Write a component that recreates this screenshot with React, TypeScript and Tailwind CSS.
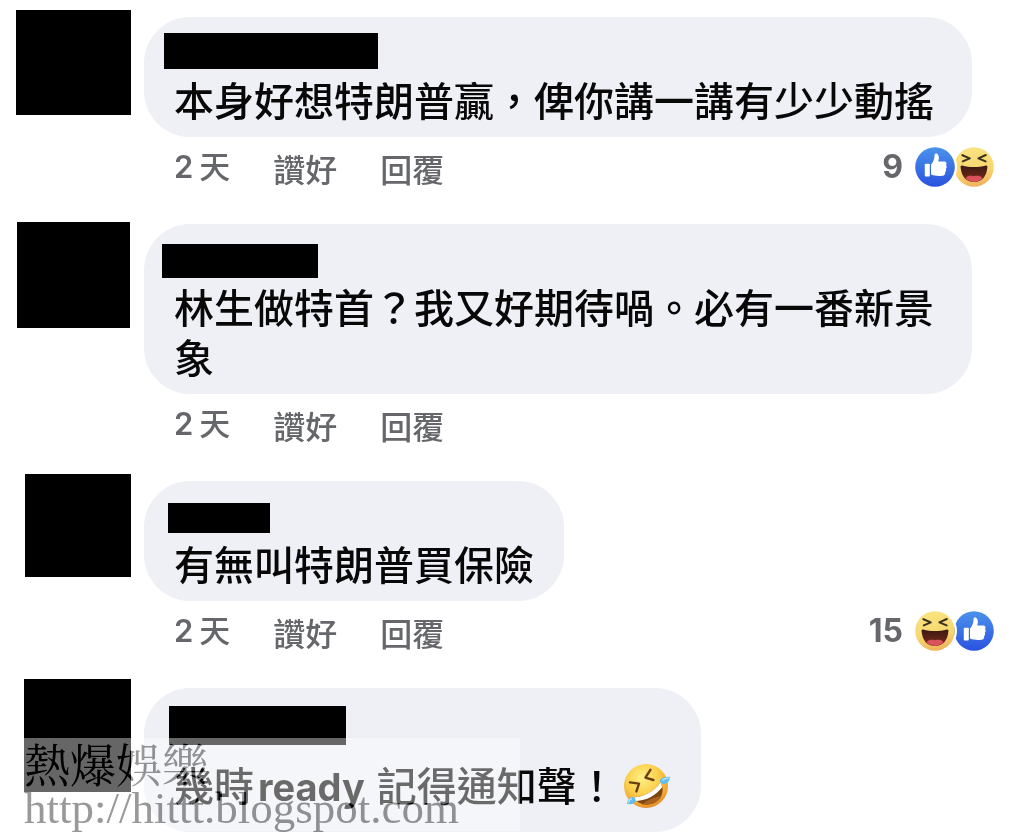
import type { ReactNode } from 'react';

type Reaction = 'like' | 'haha';

interface Comment {
  id: number;
  avatar: string;
  name: string;
  bubble: string;
  line: string;
  body: ReactNode;
  footer: boolean;
  count?: number;
  reactions?: Reaction[];
}

function LikeIcon() {
  return (
    <svg viewBox="0 0 40 40" className="size-10" role="img" aria-label="Like">
      <defs>
        <linearGradient id="like-blue" x1="0" y1="0" x2="0" y2="1">
          <stop offset="0" stopColor="#4a93ea" />
          <stop offset="1" stopColor="#2a52e0" />
        </linearGradient>
      </defs>
      <circle cx="20" cy="20" r="19.8" fill="url(#like-blue)" />
      <rect x="9.8" y="16.8" width="5" height="12.8" rx="0.8" fill="#fff" />
      <path
        d="M16 17.4C18.2 15.4 19.4 12.2 19.6 8C19.7 6 22.4 6 23.4 8.4C24.2 10.6 23.8 12.6 23.2 14.4H29.2C31.4 14.4 32.2 16.6 31 18C32 19 31.9 20.9 30.8 21.7C31.5 22.9 31.1 24.3 30.1 25C30.6 27.1 29.6 28.6 27.4 28.8C23.4 29.2 19.6 29 16 27.6Z"
        fill="#fff"
      />
    </svg>
  );
}

function HahaIcon() {
  return (
    <svg viewBox="0 0 40 40" className="size-10" role="img" aria-label="Haha">
      <defs>
        <linearGradient id="haha-face" x1="0.4" y1="0" x2="0.6" y2="1">
          <stop offset="0" stopColor="#fae480" />
          <stop offset="0.6" stopColor="#f7d670" />
          <stop offset="1" stopColor="#efb05c" />
        </linearGradient>
        <linearGradient id="haha-mouth" x1="0" y1="0" x2="0" y2="1">
          <stop offset="0" stopColor="#3a1a12" />
          <stop offset="1" stopColor="#7a2a18" />
        </linearGradient>
      </defs>
      <circle cx="20" cy="20" r="19.8" fill="url(#haha-face)" />
      <path
        d="M8.4 8.2L15.8 11.4L8.8 14.4M31.8 8L24.4 11.4L31.6 14.4"
        fill="none"
        stroke="#3b3420"
        strokeWidth="2.1"
        strokeLinecap="round"
        strokeLinejoin="round"
      />
      <path
        d="M8.2 18.6C15.5 20.6 24.5 20.6 31.8 18.6C33 18.3 33.6 19.2 33.4 20.4C32.4 29.6 28 34.8 20 34.8C12 34.8 7.6 29.6 6.6 20.4C6.4 19.2 7 18.3 8.2 18.6Z"
        fill="url(#haha-mouth)"
      />
      <path
        d="M11.6 31C13.6 28.6 16.4 28.4 20 29.2C23.6 28.4 26.4 28.6 28.4 31C26.2 33.6 23.6 34.8 20 34.8C16.4 34.8 13.8 33.6 11.6 31Z"
        fill="#d9525c"
      />
    </svg>
  );
}

function RoflIcon() {
  return (
    <svg
      viewBox="0 0 48 48"
      className="ml-[6px] size-12 shrink-0"
      role="img"
      aria-label="Rolling on the floor laughing"
    >
      <defs>
        <radialGradient id="rofl-face" cx="0.42" cy="0.32" r="0.72">
          <stop offset="0" stopColor="#fff08a" />
          <stop offset="0.5" stopColor="#fbd04c" />
          <stop offset="0.85" stopColor="#f0a431" />
          <stop offset="1" stopColor="#d9822a" />
        </radialGradient>
      </defs>
      <circle cx="23" cy="23" r="22" fill="url(#rofl-face)" />
      <path
        d="M7 19.4L16 20.6L13.4 28.4M27.4 6.8L22.4 14.6L30.4 17"
        fill="none"
        stroke="#6b3f12"
        strokeWidth="2.4"
        strokeLinecap="round"
        strokeLinejoin="round"
      />
      <path d="M10.6 34.6C21 34 31.4 28.4 37.4 19.6C42.6 27.6 38 37.8 30 40.6C22.4 43.4 14.6 41 10.6 34.6Z" fill="#7d4512" />
      <path d="M10.6 34.6C21 34 31.4 28.4 37.4 19.6C38.6 21.4 39 23 39 24.6C32.4 32.6 23.4 37.8 13.4 38C12.2 37 11.2 35.8 10.6 34.6Z" fill="#fff" />
      <path d="M19 41.2C24 37 32 34 38.6 33C36 38 29 42.4 19 41.2Z" fill="#a9631c" />
      <path d="M36.6 17.4C38.6 14.2 43 13.2 46.8 13.8C47 17.4 44.6 21 41.2 21C38.8 21 37.2 19.6 36.6 17.4Z" fill="#62bdf0" />
      <path d="M10.6 34.2C7.2 32.8 4.6 36.4 4 40.8C7.4 41.6 11.4 41 12.4 38.2C12.8 36.4 12 34.8 10.6 34.2Z" fill="#62bdf0" />
      <path d="M40 17C41.6 15.6 43.6 15 45.4 15M5.6 39.4C6 37.6 7 36.2 8.4 35.6" fill="none" stroke="#c4ebff" strokeWidth="1.2" strokeLinecap="round" />
    </svg>
  );
}

const comments: Comment[] = [
  {
    id: 1,
    avatar: 'mt-[2px] h-[105px] w-[115px]',
    name: 'mt-4 ml-5 h-9 w-[214px]',
    bubble: 'w-full',
    line: 'leading-[50px]',
    body: '本身好想特朗普贏，俾你講一講有少少動搖',
    footer: true,
    count: 9,
    reactions: ['like', 'haha'],
  },
  {
    id: 2,
    avatar: 'mt-[7px] mr-px h-[106px] w-[113px]',
    name: 'mt-5 ml-[18px] h-[34px] w-[156px]',
    bubble: 'w-full',
    line: 'leading-[50px]',
    body: '林生做特首？我又好期待喎。必有一番新景象',
    footer: true,
  },
  {
    id: 3,
    avatar: 'mt-[2px] h-[103px] w-[106px]',
    name: 'mt-[22px] ml-6 h-[30px] w-[102px]',
    bubble: 'w-fit',
    line: 'leading-[50px]',
    body: '有無叫特朗普買保險',
    footer: true,
    count: 15,
    reactions: ['haha', 'like'],
  },
  {
    id: 4,
    avatar: 'h-[113px] w-[107px]',
    name: 'mt-[18px] ml-[25px] h-[39px] w-[177px]',
    bubble: 'w-fit',
    line: 'flex items-center pt-1 leading-[70px]',
    body: (
      <>
        <span className="whitespace-nowrap">
          幾時<span className="mr-3 ml-1 text-[38px] font-bold">ready</span>記得通知聲！
        </span>
        <RoflIcon />
      </>
    ),
    footer: false,
  },
];

function Footer({ count, reactions }: Pick<Comment, 'count' | 'reactions'>) {
  return (
    <footer className="flex h-16 items-center justify-between pr-[30px] pb-1 pl-[30px] text-[#65676b]">
      <div className="flex items-center gap-[43px] text-[32px] leading-10 font-medium">
        <time className="flex items-center gap-[6px] text-[31px]">
          <span className="font-semibold">2</span>
          <span>天</span>
        </time>
        <button type="button" className="cursor-pointer pt-2">讚好</button>
        <button type="button" className="cursor-pointer pt-2">回覆</button>
      </div>
      {reactions && (
        <div className="flex items-center gap-3">
          <span className="text-[32px] leading-10 font-bold">{count}</span>
          <span className="flex">
            {reactions.map((kind, i) => (
              <span
                key={kind}
                className={i === 0 ? 'relative z-10 rounded-full ring-2 ring-white' : '-ml-px'}
              >
                {kind === 'like' ? <LikeIcon /> : <HahaIcon />}
              </span>
            ))}
          </span>
        </div>
      )}
    </footer>
  );
}

function Watermark() {
  return (
    <div className="absolute top-[59px] left-6 w-[496px] bg-white/40 pb-px">
      <div className="text-[#666] mix-blend-difference">
        <p className="font-['Noto_Serif_CJK_TC','Noto_Sans_CJK_TC',serif] text-[46px] leading-[48px] font-normal">
          熱爆娛樂
        </p>
        <a
          href="http://hittt.blogspot.com"
          className="block font-['Liberation_Serif',serif] text-[45px] leading-[44px]"
        >
          http://hittt.blogspot.com
        </a>
      </div>
    </div>
  );
}

export default function App() {
  return (
    <main
      lang="zh-Hant"
      className="flex min-h-screen flex-col gap-[14px] bg-white pt-2 font-[Inter,'Noto_Sans_CJK_TC',sans-serif]"
    >
      {comments.map((c) => (
        <article key={c.id} className="relative flex items-start gap-[13px]">
          <div className="flex w-[131px] shrink-0 justify-end">
            <div className={`bg-black ${c.avatar}`} />
          </div>
          <div className="min-w-0 flex-1 pt-[9px]">
            <div className="pr-[52px]">
              <div className={`rounded-[46px] bg-[#eff0f5] pb-[10px] ${c.bubble}`}>
                <div className="flex h-[60px] items-start">
                  <div className={`bg-black ${c.name}`} />
                </div>
                <div className={`px-[30px] text-[40px] font-medium text-[#080809] ${c.line}`}>
                  {c.body}
                </div>
              </div>
            </div>
            {c.footer && <Footer count={c.count} reactions={c.reactions} />}
          </div>
          {c.id === comments.length && <Watermark />}
        </article>
      ))}
    </main>
  );
}
